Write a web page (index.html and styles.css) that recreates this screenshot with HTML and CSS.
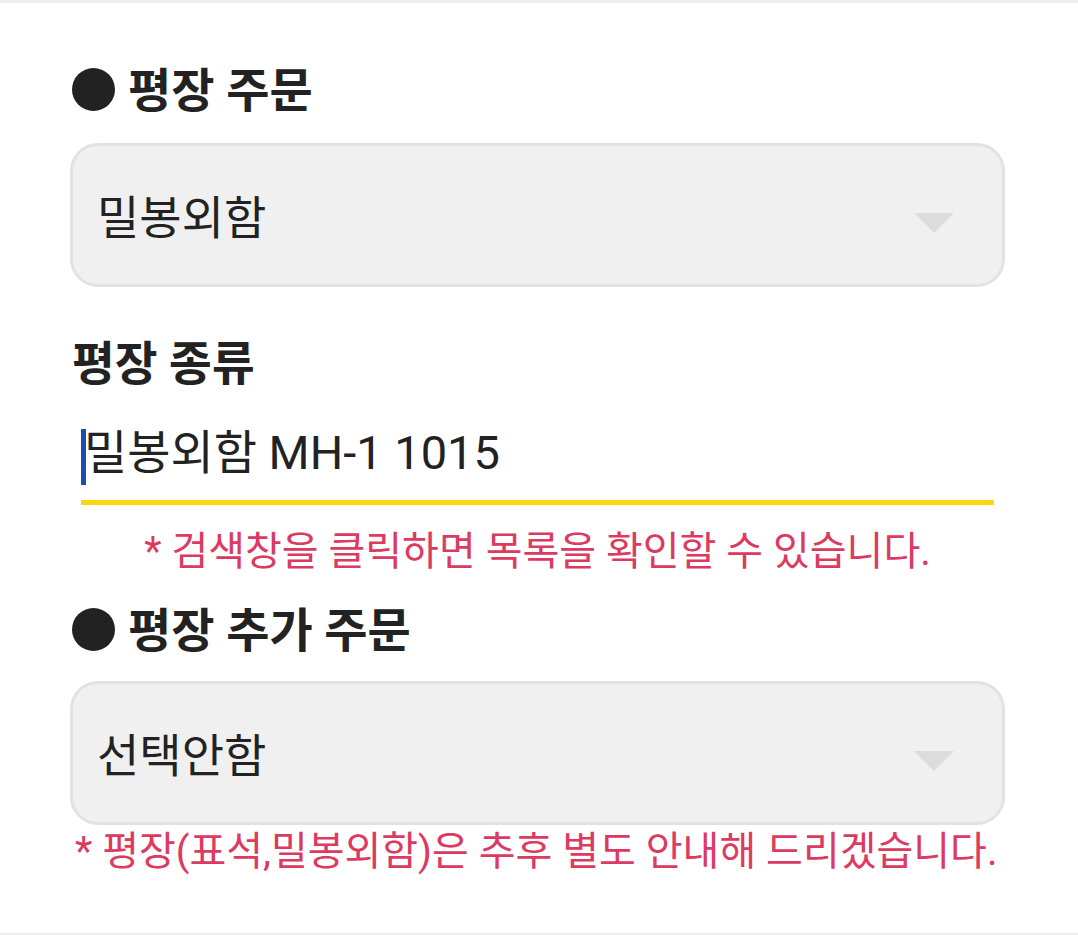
FILE: index.html
```html
<!DOCTYPE html>
<html lang="ko">
<head>
<meta charset="utf-8">
<title>평장 주문</title>
<link rel="stylesheet" href="styles.css">
</head>
<body>
<div class="page">
  <h2 class="section-title"><span class="dot"></span>평장 주문</h2>
  <div class="select first">
    <span class="select-value">밀봉외함</span>
    <svg class="arrow" width="40" height="20" viewBox="0 0 40 20"><path d="M0 0 H40 L20 20 Z" fill="#dcdcdc"/></svg>
  </div>

  <div class="field-label">평장 종류</div>
  <div class="search"><span class="caret"></span><span class="search-text">밀봉외함 MH-1 1015</span></div>
  <p class="hint hint-center">* 검색창을 클릭하면 목록을 확인할 수 있습니다.</p>

  <h2 class="section-title second"><span class="dot"></span>평장 추가 주문</h2>
  <div class="select">
    <span class="select-value">선택안함</span>
    <svg class="arrow" width="40" height="20" viewBox="0 0 40 20"><path d="M0 0 H40 L20 20 Z" fill="#dcdcdc"/></svg>
  </div>
  <p class="hint hint-left">* 평장(표석,밀봉외함)은 추후 별도 안내해 드리겠습니다.</p>
</div>
</body>
</html>
```

FILE: styles.css
```css
html, body {
  margin: 0;
  padding: 0;
  background: #ffffff;
}
body {
  font-family: Roboto, "Noto Sans CJK KR", sans-serif;
  color: #222222;
  border-top: 3px solid #eeeeee;
  border-bottom: 2px solid #eeeeee;
  height: 935px;
  box-sizing: border-box;
}
.page {
  width: 935px;
  margin-left: 70px;
  padding-top: 60px;
}
.section-title {
  margin: 0;
  font-size: 47px;
  line-height: 56px;
  font-weight: 700;
  display: flex;
  align-items: center;
  gap: 13px;
  padding-left: 2px;
}
.section-title.second {
  margin-top: 26px;
}
.dot {
  width: 43px;
  height: 43px;
  border-radius: 50%;
  background: #222222;
  flex: none;
  margin-top: -4px;
}
.select {
  margin-top: 22px;
  height: 144px;
  box-sizing: border-box;
  border: 3px solid #e2e2e2;
  border-radius: 28px;
  background: #f0f0f0;
  display: flex;
  align-items: center;
  justify-content: space-between;
  padding: 0 48px 0 24px;
}
.select.first {
  margin-top: 24px;
}
.select-value {
  font-size: 46px;
  line-height: 56px;
  color: #222222;
  padding-top: 6px;
}
.arrow {
  display: block;
  margin-top: 16px;
}
.field-label {
  margin-top: 49px;
  font-size: 46.5px;
  line-height: 56px;
  font-weight: 700;
  padding-left: 2px;
}
.search {
  margin: 28px 11px 0 11px;
  border-bottom: 5px solid #fad512;
  height: 80px;
  box-sizing: content-box;
  display: flex;
  align-items: flex-start;
}
.caret {
  width: 5px;
  height: 56px;
  background: #1a4fb0;
  flex: none;
  margin-top: 9px;
  margin-right: -2px;
}
.search-text {
  font-size: 47px;
  line-height: 60px;
  margin-top: 3px;
  color: #222222;
}
.hint {
  margin: 0;
  font-size: 40px;
  line-height: 50px;
  color: #dc3a60;
}
.hint-center {
  text-align: center;
  margin-top: 22px;
}
.hint-left {
  margin-top: 2px;
  padding-left: 5px;
}
```
